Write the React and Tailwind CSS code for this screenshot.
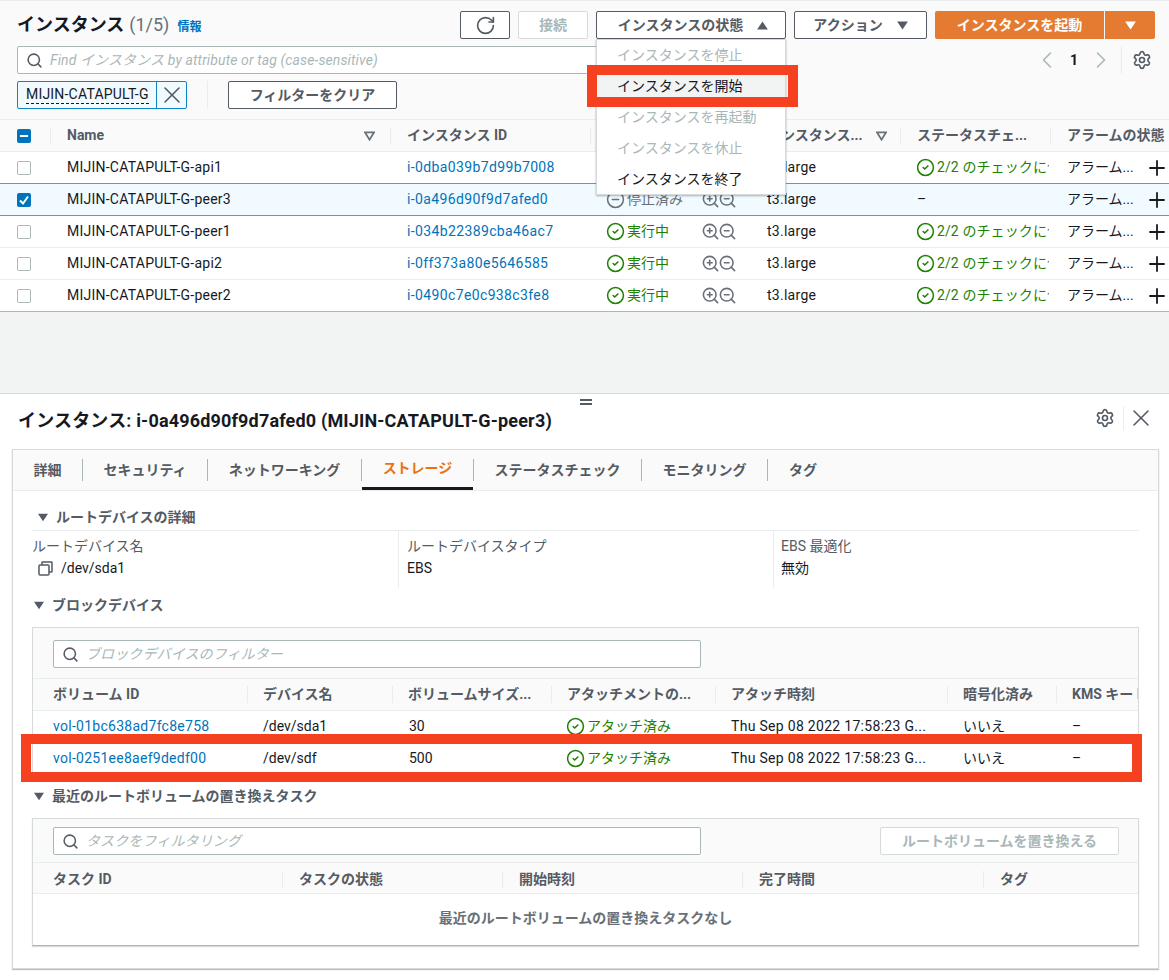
import React from 'react';
import { Search, RotateCw, Settings, X, Plus, ZoomIn, ZoomOut, CircleCheck, CircleMinus, ChevronLeft, ChevronRight } from 'lucide-react';

const Tri = ({ up, className }) => (
  <svg viewBox="0 0 12 10" className={className} fill="currentColor">
    <polygon points={up ? '6,0.5 12,9.5 0,9.5' : '0,0.5 12,0.5 6,9.5'} />
  </svg>
);
const SortTri = ({ className }) => (
  <svg viewBox="0 0 12 10" className={'w-[11px] h-[10px] text-[#687078] ' + (className || '')} fill="none" stroke="currentColor" strokeWidth="1.9">
    <polygon points="1,1 11,1 6,9" />
  </svg>
);
const CopyIcon = () => (
  <svg viewBox="0 0 15 15" className="w-[15px] h-[15px] text-[#545b64]" fill="none" stroke="currentColor" strokeWidth="1.5">
    <rect x="1" y="4" width="10" height="10" rx="1" />
    <path d="M4 4V1.5A.5.5 0 0 1 4.5 1H13.5A.5.5 0 0 1 14 1.5V10.5A.5.5 0 0 1 13.5 11H11" />
  </svg>
);
const Check = ({ state }) => {
  if (state === 'none') return <div className="w-[14px] h-[14px] rounded-[2px] border border-[#aab7b8] bg-white" />;
  return (
    <div className="w-[14px] h-[14px] rounded-[2px] bg-[#0073bb] flex items-center justify-center">
      {state === 'on' ? (
        <svg viewBox="0 0 14 14" className="w-[14px] h-[14px]" fill="none" stroke="#fff" strokeWidth="2"><path d="M3 7.5 6 10.5 11 3.5" /></svg>
      ) : (
        <div className="w-[8px] h-[2px] bg-white" />
      )}
    </div>
  );
};
const Btn = ({ className, children }) => (
  <div className={'h-[28px] border border-[#545b64] rounded-[2px] bg-white text-[#545b64] font-bold text-[14px] flex items-center justify-center ' + className}>{children}</div>
);
const HCell = ({ first, children, sort, sortClass, tight }) => (
  <div className="h-full flex items-center min-w-0">
    <div className={'h-[17px] w-full flex items-center justify-between pr-[13px] whitespace-nowrap overflow-hidden ' + (tight ? 'pl-[15px] ' : 'pl-4 ') + (first ? '' : 'border-l border-[#eaeded]')}>
      <span className="font-bold text-[14px] text-[#545b64]">{children}</span>
      {sort && <SortTri className={sortClass} />}
    </div>
  </div>
);
const Ok = () => <CircleCheck size={19} strokeWidth={1.9} className="shrink-0 -ml-[1px]" />;

const rows = [
  ['MIJIN-CATAPULT-G-api1', 'i-0dba039b7d99b7008', true, false],
  ['MIJIN-CATAPULT-G-peer3', 'i-0a496d90f9d7afed0', false, true],
  ['MIJIN-CATAPULT-G-peer1', 'i-034b22389cba46ac7', true, false],
  ['MIJIN-CATAPULT-G-api2', 'i-0ff373a80e5646585', true, false],
  ['MIJIN-CATAPULT-G-peer2', 'i-0490c7e0c938c3fe8', true, false],
];

const MainRow = ({ r, i }) => {
  const [name, id, running, selected] = r;
  const border = i === 4 ? 'border-[#aab7b8]' : i === 0 || selected ? 'border-[#44a5c9]' : 'border-[#eaeded]';
  return (
    <div className={'grid grid-cols-[50px_340px_200px_160px_150px_150px_119px] h-[32px] border-b items-center text-[14px] text-[#16191f] whitespace-nowrap ' + border + ' ' + (selected ? 'bg-[#f1faff]' : 'bg-white')}>
      <div className="pl-[17px]"><Check state={selected ? 'on' : 'none'} /></div>
      <div className="pl-[17px] tracking-[0.24px]">{name}</div>
      <div className="pl-[17px] tracking-[0.37px] text-[#0073bb]">{id}</div>
      <div className="pl-[17px] flex items-center">
        <div className={'w-[94px] flex items-center gap-[2px] ' + (running ? 'text-[#1d8102]' : 'text-[#687078]')}>
          {running ? <Ok /> : <CircleMinus size={19} strokeWidth={1.9} className="-ml-[1px]" />}
          <span>{running ? '実行中' : '停止済み'}</span>
        </div>
        <div className="flex text-[#687078]">
          <ZoomIn size={19} strokeWidth={2} />
          <ZoomOut size={19} strokeWidth={2} className="-ml-[2px]" />
        </div>
      </div>
      <div className="pl-[17px] tracking-[0.27px]">t3.large</div>
      <div className="pl-[17px] pr-[1px] overflow-hidden">
        {running ? (
          <div className="flex items-center gap-[2px] text-[#1d8102] overflow-hidden">
            <Ok />
            <span className="tracking-[0.1px]">2/2 のチェックに合</span>
          </div>
        ) : '–'}
      </div>
      <div className="pl-[17px] flex items-center justify-between">
        <span>アラーム...</span>
        <Plus size={24} strokeWidth={1.8} className="text-[#16191f] shrink-0" />
      </div>
    </div>
  );
};

const SearchBox = ({ ph, className }) => (
  <div className={'h-[28px] border border-[#aab7b8] rounded-[2px] bg-white flex items-center pl-[8px] gap-[7px] ' + className}>
    <Search size={17} strokeWidth={2.2} className="text-[#545b64] shrink-0" />
    <span className="italic text-[14px] text-[#aab7b8] whitespace-nowrap tracking-[0.12px]">{ph}</span>
  </div>
);

const Tab = ({ w, active, children }) => (
  <div className={'h-full flex items-center justify-center font-bold text-[14px] ' + w + ' ' + (active ? 'text-[#ec7211] border-b-[3px] border-[#16191f]' : 'text-[#545b64]')}>{children}</div>
);
const TabSep = () => <div className="w-px h-[22px] bg-[#aab7b8]" />;

const VolRow = ({ vol, dev, size }) => (
  <div className="grid grid-cols-[214px_145px_159px_164px_232px_109px_82px] h-[32px] items-center bg-white border-b border-[#eaeded] text-[14px] text-[#16191f] whitespace-nowrap">
    <div className="pl-[20px] tracking-[0.27px] text-[#0073bb]">{vol}</div>
    <div className="pl-4">{dev}</div>
    <div className="pl-[17px]">{size}</div>
    <div className="pl-4 flex items-center gap-[2px] text-[#1d8102]"><Ok /><span>アタッチ済み</span></div>
    <div className="pl-4 tracking-[0.3px]">Thu Sep 08 2022 17:58:23 G...</div>
    <div className="pl-4">いいえ</div>
    <div className="pl-4">–</div>
  </div>
);

export default function App() {
  return (
    <div className="relative w-[1169px] h-[980px] overflow-hidden bg-white font-[Roboto,'Noto_Sans_CJK_JP',sans-serif] text-[#16191f]">
      {/* top panel */}
      <div className="h-[312px] bg-[#fafafa] pt-[11px] border-t border-[#eaeded] box-border">
        <div className="h-[28px] mt-[-1px] flex items-center pl-[17px] pr-[14px]">
          <div className="flex items-baseline pb-[2px]">
            <span className="font-bold text-[18px]">インスタンス</span>
            <span className="text-[18px] text-[#687078] ml-[5px]">(1/5)</span>
            <span className="font-bold text-[12px] text-[#0073bb] ml-[8px]">情報</span>
          </div>
          <div className="ml-auto flex items-center">
            <Btn className="w-[50px] mr-[8px]"><RotateCw size={21} strokeWidth={1.9} /></Btn>
            <div className="w-[70px] h-[28px] mr-[8px] border border-[#d5dbdb] rounded-[2px] bg-white text-[#aab7b8] font-bold text-[14px] flex items-center justify-center">接続</div>
            <Btn className="w-[190px] mr-[8px] gap-[14px] pl-[4px]">インスタンスの状態<Tri up className="w-[11px] h-[9px]" /></Btn>
            <Btn className="w-[133px] mr-[8px] gap-[14px]">アクション<Tri className="w-[11px] h-[9px]" /></Btn>
            <div className="w-[169px] h-[28px] rounded-l-[2px] bg-[#e47b30] text-white font-bold text-[14px] flex items-center justify-center">インスタンスを起動</div>
            <div className="w-[50px] h-[28px] ml-px rounded-r-[2px] bg-[#e47b30] text-white flex items-center justify-center"><Tri className="w-[11px] h-[9px]" /></div>
          </div>
        </div>
        <div className="h-[28px] mt-[7px] flex items-center pl-[17px] pr-[17px]">
          <SearchBox ph="Find インスタンス by attribute or tag (case-sensitive)" className="w-[720px]" />
          <div className="ml-auto flex items-center h-[26px]">
            <ChevronLeft size={28} strokeWidth={1.4} className="text-[#aab7b8]" />
            <span className="w-[26px] text-center font-bold text-[14px] text-[#16191f]">1</span>
            <ChevronRight size={28} strokeWidth={1.4} className="text-[#aab7b8]" />
            <div className="w-px h-[28px] bg-[#eaeded] ml-[6px] mr-[10px]" />
            <Settings size={20} strokeWidth={2} className="text-[#545b64]" />
          </div>
        </div>
        <div className="h-[28px] mt-[7px] flex items-center pl-[17px]">
          <div className="h-[28px] w-[170px] flex border border-[#0a84c6] rounded-[2px] bg-[#f1faff] text-[14px]">
            <div className="w-[139px] border-r border-[#0a84c6] flex items-center pl-[8px] whitespace-nowrap">
              <span className="border-b border-dashed border-[#16191f] leading-[17px] tracking-[0.2px]">MIJIN-CATAPULT-G</span>
            </div>
            <div className="flex-1 flex items-center justify-center text-[#545b64]"><X size={28} strokeWidth={1.3} className="shrink-0" /></div>
          </div>
          <div className="w-px h-[28px] bg-[#eaeded] ml-[20px]" />
          <Btn className="w-[169px] ml-[20px]">フィルターをクリア</Btn>
        </div>
        <div className="mt-[10px]">
          <div className="grid grid-cols-[50px_340px_200px_160px_150px_150px_119px] h-[33px] border-y border-[#eaeded] items-center">
            <div className="pl-[17px]"><Check state="mixed" /></div>
            <HCell sort sortClass="mr-[2px]">Name</HCell>
            <HCell>インスタンス ID</HCell>
            <HCell>インスタンスの状態</HCell>
            <HCell sort>インスタンス...</HCell>
            <HCell>ステータスチェ...</HCell>
            <HCell>アラームの状態</HCell>
          </div>
          {rows.map((r, i) => <MainRow key={r[1]} r={r} i={i} />)}
        </div>
      </div>

      {/* gap */}
      <div className="h-[81px] bg-[#f2f3f3]" />

      {/* bottom panel */}
      <div className="relative border-t border-[#d5dbdb] bg-white">
        <div className="absolute left-[580px] top-[5px] w-[12px] h-[6px] border-y-2 border-[#545b64]" />
        <div className="h-[28px] mt-[12px] flex items-center pl-[18px] pr-[14px]">
          <span className="font-bold text-[18px] whitespace-nowrap tracking-[0.17px]">インスタンス: i-0a496d90f9d7afed0 (MIJIN-CATAPULT-G-peer3)</span>
          <div className="ml-auto flex items-center text-[#545b64] -translate-y-[2px]">
            <Settings size={20} strokeWidth={2} />
            <div className="w-px h-[24px] bg-[#eaeded] ml-[8px] mr-[3px]" />
            <X size={28} strokeWidth={1.3} />
          </div>
        </div>

        <div className="mt-[15px] ml-[12px] w-[1147px] h-[520px] border border-[#d5dbdb] shadow-[0_1px_1px_rgba(0,0,0,0.25)] bg-white">
          <div className="h-[41px] bg-[#fafafa] border-b border-[#eaeded] flex items-center">
            <Tab w="w-[69px]">詳細</Tab><TabSep />
            <Tab w="w-[124px]">セキュリティ</Tab><TabSep />
            <Tab w="w-[153px]">ネットワーキング</Tab><TabSep />
            <Tab w="w-[111px]" active>ストレージ</Tab><TabSep />
            <Tab w="w-[167px]">ステータスチェック</Tab><TabSep />
            <Tab w="w-[125px]">モニタリング</Tab><TabSep />
            <Tab w="w-[70px]">タグ</Tab>
          </div>

          <div className="pl-[19px] pr-[19px]">
            <div className="h-[40px] flex items-center pl-[6px] pt-[13px] gap-[8px] font-bold text-[14px] text-[#545b64] border-b border-[#eaeded]">
              <Tri className="w-[10px] h-[9px]" />ルートデバイスの詳細
            </div>
            <div className="grid grid-cols-[366px_375px_365px] h-[57px] text-[14px]">
              <div className="pt-[4px]">
                <div className="text-[#545b64] leading-[22px]">ルートデバイス名</div>
                <div className="flex items-center gap-[8px] pl-[6px] leading-[22px]"><CopyIcon />/dev/sda1</div>
              </div>
              <div className="pt-[4px] pl-[8px] border-l border-[#eaeded]">
                <div className="text-[#545b64] leading-[22px]">ルートデバイスタイプ</div>
                <div className="leading-[22px]">EBS</div>
              </div>
              <div className="pt-[4px] pl-[7px] border-l border-[#eaeded]">
                <div className="text-[#545b64] leading-[22px]">EBS 最適化</div>
                <div className="leading-[22px]">無効</div>
              </div>
            </div>

            <div className="h-[34px] mb-[5px] flex items-center pl-[2px] gap-[8px] font-bold text-[14px] text-[#545b64]">
              <Tri className="w-[10px] h-[9px]" />ブロックデバイス
            </div>
            <div className="w-[1107px] border-x border-t border-[#d5dbdb] bg-[#fafafa] overflow-hidden">
              <div className="h-[51px] pt-[12px] pl-[20px] border-b border-[#eaeded]">
                <SearchBox ph="ブロックデバイスのフィルター" className="w-[648px]" />
              </div>
              <div className="grid grid-cols-[214px_145px_159px_164px_232px_109px_82px] h-[32px] border-b border-[#eaeded] items-center">
                <div className="pl-[4px]"><HCell first>ボリューム ID</HCell></div>
                <HCell tight>デバイス名</HCell>
                <HCell tight>ボリュームサイズ...</HCell>
                <HCell tight>アタッチメントの...</HCell>
                <HCell tight>アタッチ時刻</HCell>
                <HCell tight>暗号化済み</HCell>
                <HCell tight>KMS キー ID</HCell>
              </div>
              <VolRow vol="vol-01bc638ad7fc8e758" dev="/dev/sda1" size="30" />
              <VolRow vol="vol-0251ee8aef9dedf00" dev="/dev/sdf" size="500" />
            </div>

            <div className="h-[42px] mb-[1px] flex items-center pl-[2px] gap-[8px] font-bold text-[14px] text-[#545b64]">
              <Tri className="w-[10px] h-[9px]" />最近のルートボリュームの置き換えタスク
            </div>
            <div className="w-[1107px] border border-[#d5dbdb] border-b-[#aab7b8] shadow-[0_1px_1px_rgba(0,0,0,0.15)] bg-white">
              <div className="h-[44px] bg-[#fafafa] pt-[8px] pl-[20px] pr-[19px] border-b border-[#eaeded] flex justify-between">
                <SearchBox ph="タスクをフィルタリング" className="w-[648px]" />
                <div className="w-[239px] h-[28px] border border-[#d5dbdb] rounded-[2px] bg-white text-[#aab7b8] font-bold text-[14px] flex items-center justify-center">ルートボリュームを置き換える</div>
              </div>
              <div className="grid grid-cols-[249px_220px_240px_241px_155px] h-[31px] pt-[2px] bg-[#fafafa] border-b border-[#eaeded] items-center">
                <div className="pl-[4px]"><HCell first>タスク ID</HCell></div>
                <HCell>タスクの状態</HCell>
                <HCell>開始時刻</HCell>
                <HCell>完了時間</HCell>
                <HCell>タグ</HCell>
              </div>
              <div className="h-[51px] pb-[3px] flex items-center justify-center font-bold text-[14px] text-[#687078]">最近のルートボリュームの置き換えタスクなし</div>
            </div>
          </div>
        </div>
      </div>

      {/* dropdown overlay */}
      <div className="absolute left-[596px] top-[39px] w-[190px] h-[156px] bg-white border border-[#d5dbdb] shadow-[0_1px_2px_rgba(0,0,0,0.3)] text-[14px] text-[#aab7b8]">
        <div className="h-[31px] flex items-center pl-[20px] pb-[1px]">インスタンスを停止</div>
        <div className="h-[31px] flex items-center pl-[20px] pb-[1px] bg-[#f2f3f3] text-[#16191f]">インスタンスを開始</div>
        <div className="h-[31px] flex items-center pl-[20px] pb-[1px]">インスタンスを再起動</div>
        <div className="h-[31px] flex items-center pl-[20px] pb-[1px]">インスタンスを休止</div>
        <div className="h-[31px] flex items-center pl-[20px] pb-[1px] text-[#16191f]">インスタンスを終了</div>
      </div>

      {/* annotation rectangles */}
      <div className="absolute left-[587px] top-[65px] w-[211px] h-[42px] border-[10px] border-[#f5411f]" />
      <div className="absolute left-[21px] top-[734px] w-[1121px] h-[48px] border-[10px] border-[#f5411f]" />
    </div>
  );
}
